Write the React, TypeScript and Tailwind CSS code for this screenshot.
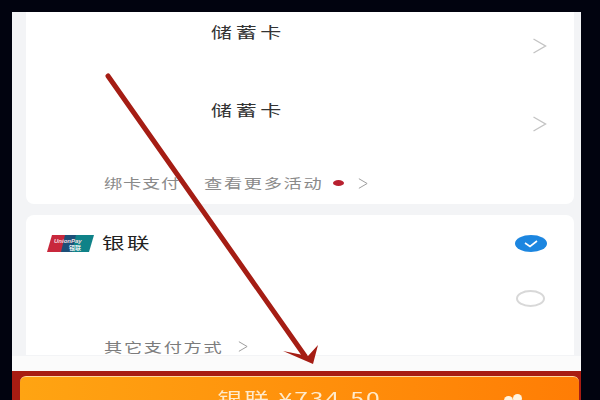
const cjk = "font-['Noto_Sans_CJK_SC','Noto_Sans',sans-serif]";

function Chevron({ className }: { className: string }) {
  return (
    <svg viewBox="0 0 14 16" fill="none" stroke="currentColor" strokeWidth="1.4" className={className}>
      <path d="M1 1l12 7-12 7" />
    </svg>
  );
}

function UnionPayLogo() {
  return (
    <svg viewBox="0 0 47 17" className="w-[47px] h-[17px] shrink-0">
      <path d="M5 0h16l-4 17H0z" fill="#c8283c" />
      <path d="M18 0h14l-4 17H14z" fill="#1d4f78" />
      <path d="M29 0h18l-5 17H25z" fill="#0f8288" />
      <text x="7" y="7.5" fontSize="6" fontStyle="italic" fontWeight="700" fill="#f4dfe0" fontFamily="Liberation Sans">UnionPay</text>
      <text x="22" y="14.5" fontSize="6" fontWeight="700" fill="#e4f0f0" fontFamily="Noto Sans CJK SC">银联</text>
    </svg>
  );
}

function CardRow({ last }: { last?: boolean }) {
  return (
    <div className={`flex items-start pl-[185px] pr-[27px] ${last ? "h-[60px]" : "h-[78px]"}`}>
      <span className="flex-1 mt-[7px]">
        <span className="inline-block origin-left scale-x-[1.4] text-[15px] leading-6 tracking-[2.6px] text-[#333333]">储蓄卡</span>
      </span>
      <Chevron className="w-[15px] h-[16px] mt-[26px] text-[#c4c4c4]" />
    </div>
  );
}

export default function App() {
  return (
    <div className={`relative w-[600px] h-[400px] overflow-hidden bg-[#01030f] pt-3 pl-3 ${cjk}`}>
      <div className="flex flex-col w-[569px] h-[388px] bg-[#f3f4f6] blur-[0.4px]">
        <div className="flex flex-col flex-1 pl-[14px] pr-[7px]">
          <div className="h-[192px] bg-white rounded-b-lg">
            <CardRow />
            <CardRow last />
            <div className="flex items-center pl-[78px] mt-[21px] h-[24px] text-[13px] text-[#8a8a8a]">
              <span className="w-[100px]">
                <span className="inline-block origin-left scale-x-[1.4] tracking-[0.6px]">绑卡支付</span>
              </span>
              <span className="w-[126px]">
                <span className="inline-block origin-left scale-x-[1.4] tracking-[1.2px]">查看更多活动</span>
              </span>
              <span className="w-[11px] h-[6px] rounded-[50%] bg-[#b8202f] ml-[3px]" />
              <Chevron className="w-[10px] h-[11px] ml-[14px] text-[#9a9a9a]" />
            </div>
          </div>

          <div className="flex flex-col h-[140px] mt-[11px] bg-white rounded-t-lg">
            <div className="flex items-center h-[17px] mt-[20px] pl-[21px] pr-[27px]">
              <UnionPayLogo />
              <span className="flex-1 ml-[8px]">
                <span className="inline-block -translate-y-[2px] origin-left scale-x-[1.4] text-[16px] tracking-[1.8px] text-[#222222]">银联</span>
              </span>
              <span className="flex items-center justify-center w-[32px] h-[17px] rounded-[50%] bg-[#1c86e0]">
                <svg viewBox="0 0 14 8" fill="none" stroke="white" strokeWidth="1.6" className="w-[14px] h-[8px]">
                  <path d="M1 3l5 3.5L13 1" />
                </svg>
              </span>
            </div>
            <div className="flex justify-end h-[17px] mt-[38px] pr-[29px]">
              <span className="w-[29px] h-[17px] rounded-[50%] border-2 border-[#d8d8d8]" />
            </div>
            <div className="flex items-center pl-[78px] mt-[30px] h-[20px] text-[13px] text-[#7c7c7c]">
              <span className="w-[134px]">
                <span className="inline-block origin-left scale-x-[1.4] tracking-[1.2px]">其它支付方式</span>
              </span>
              <Chevron className="w-[10px] h-[11px] text-[#9a9a9a]" />
            </div>
          </div>
        </div>

        <div className="h-[15px] bg-[#fbfbfb]" />

        <div className="h-[29px] bg-[#a81c12] pt-[5px] pl-[8px] pr-[2px]">
          <div className="relative h-[40px] rounded-t-md border-t border-[#ffd9a0] bg-gradient-to-r from-[#ffa412] to-[#ff7d05] text-center">
            <span className="inline-block mt-[9px] scale-x-[1.45] text-[17px] leading-6 tracking-[1.4px] text-[#ffeacb]">银联 ¥734.50</span>
            <span className="absolute left-[484px] top-[19px] w-[9px] h-[9px] rounded-full bg-[#fff4e0]" />
            <span className="absolute left-[493px] top-[17px] w-[9px] h-[9px] rounded-full bg-[#fff4e0]" />
          </div>
        </div>
      </div>

      <svg viewBox="0 0 600 400" className="absolute inset-0 w-[600px] h-[400px] pointer-events-none">
        <path d="M108 76L305 356" stroke="#a51d14" strokeWidth="5" strokeLinecap="round" fill="none" />
        <path d="M283 351L313 364L318 345L308 356Z" fill="#a51d14" />
      </svg>
    </div>
  );
}
